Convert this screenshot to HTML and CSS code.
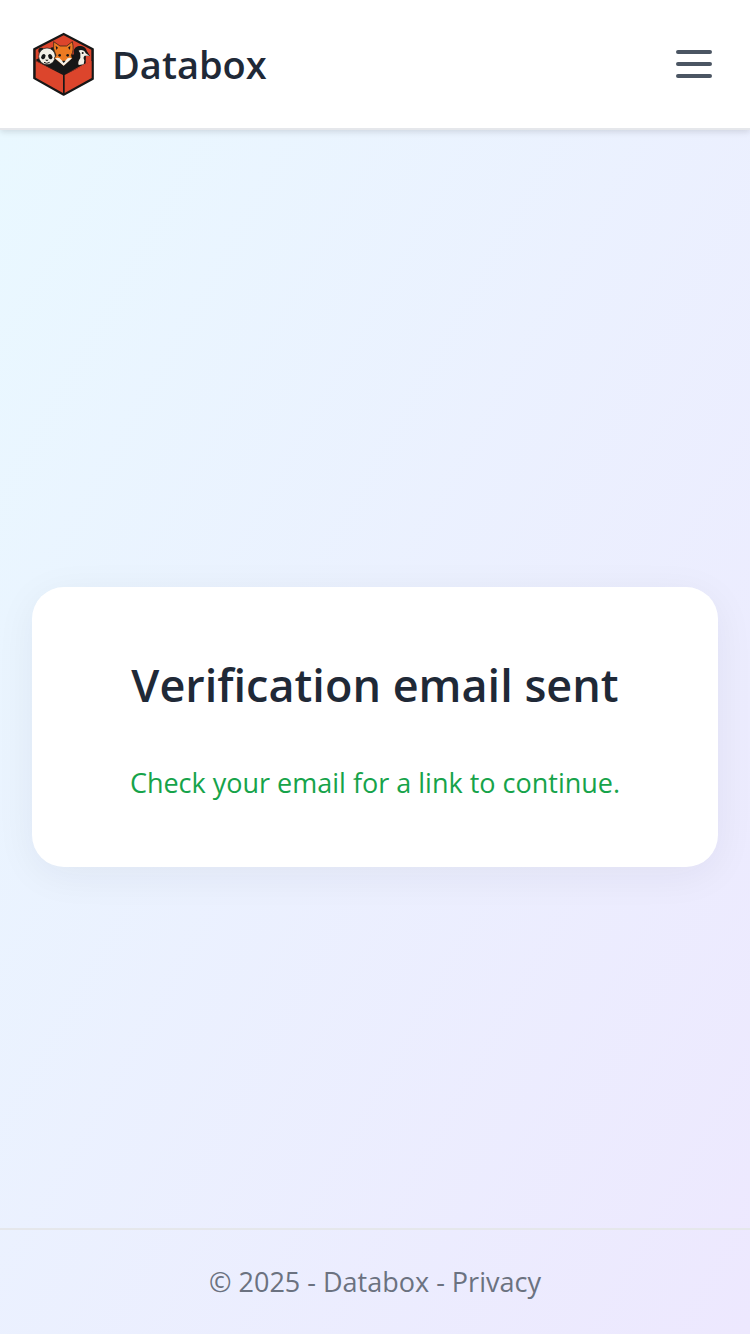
FILE: index.html
```html
<!DOCTYPE html>
<html lang="en">
<head>
<meta charset="utf-8">
<meta name="viewport" content="width=device-width, initial-scale=1">
<title>Databox</title>
<link rel="stylesheet" href="styles.css">
</head>
<body class="page">
<header class="header">
  <a class="brand" href="#">
    <svg class="brand-logo" viewBox="24 24 192 192" aria-hidden="true">
      <path d="M119 29 207 75V165L119 213 30 163V75Z" fill="#171717" stroke="#171717" stroke-width="5" stroke-linejoin="round"/>
      <path d="M119 34 202 77V113L175 127 121 150 66 125 35 110V77Z" fill="#dc452c"/>
      <path d="M37 106 67 96 94 82 119 82 148 92 165 72 185 94V118L121 152 66 125 37 110Z" fill="#171717"/>
      <path d="M35 111 117 153V207L35 161Z" fill="#dc452c"/>
      <path d="M203 111 122 153V207L203 162Z" fill="#dc452c"/>
      <circle cx="52" cy="80" r="9" fill="#171717"/>
      <circle cx="86" cy="79" r="9" fill="#171717"/>
      <ellipse cx="69" cy="97" rx="25" ry="25" fill="#f4f0e6" stroke="#171717" stroke-width="2"/>
      <ellipse cx="58" cy="98" rx="6" ry="8" transform="rotate(30 58 98)" fill="#171717"/>
      <ellipse cx="79" cy="98" rx="6" ry="8" transform="rotate(-30 79 98)" fill="#171717"/>
      <path d="M63 107H74L69 112Z" fill="#171717"/>
      <path d="M60 115Q68 121 77 115" fill="none" stroke="#171717" stroke-width="3"/>
      <path d="M89 53 108 66H128L145 53Q151 79 142 94L145 103 119 126 91 103 96 94Q85 74 89 53Z" fill="#ec7a22" stroke="#171717" stroke-width="2"/>
      <path d="M95 65 102 71 97 78ZM139 65 132 71 138 78Z" fill="#171717"/>
      <path d="M93 103Q106 98 112 108L119 114 126 108Q132 98 144 103L119 125Z" fill="#f4f0e6"/>
      <ellipse cx="107" cy="94" rx="4" ry="4" fill="#171717"/>
      <ellipse cx="131" cy="94" rx="4" ry="4" fill="#171717"/>
      <path d="M114 110H125L119 117Z" fill="#171717"/>
      <path d="M149 82C152 60 184 61 189 82L198 96 185 96 183 118 151 127Z" fill="#171717"/>
      <path d="M164 80C171 76 182 79 185 88L196 95 182 95Q176 100 181 109L179 121 164 123Q160 114 169 102L169 88Z" fill="#f4f0e6"/>
      <circle cx="176" cy="87" r="3" fill="#171717"/>
    </svg>
    <span class="brand-name">Databox</span>
  </a>
  <button class="menu-button" type="button" aria-label="Open menu">
    <svg class="menu-icon" viewBox="0 0 24 24" aria-hidden="true">
      <path d="M4 6h16M4 12h16M4 18h16" fill="none" stroke="currentColor" stroke-width="2" stroke-linecap="round"/>
    </svg>
  </button>
</header>
<main class="main">
  <section class="card">
    <h1 class="card-title">Verification email sent</h1>
    <p class="card-message">Check your email for a link to continue.</p>
  </section>
</main>
<footer class="footer">© 2025 - Databox - <a class="footer-link" href="#">Privacy</a></footer>
</body>
</html>
```
FILE: styles.css
```css
*, *::before, *::after {
  box-sizing: border-box;
}

.page {
  margin: 0;
  min-height: 100vh;
  display: flex;
  flex-direction: column;
  font-family: "Open Sans", "Noto Sans", sans-serif;
  color: #1f2937;
  background: linear-gradient(to bottom right, #e9f9ff, #ede8fe);
}

.header {
  display: flex;
  align-items: center;
  justify-content: space-between;
  padding: 32px;
  background: #fff;
  border-bottom: 2px solid #e5e7eb;
  box-shadow: 0 2px 6px rgba(0, 0, 0, 0.12);
}

.brand {
  display: flex;
  align-items: center;
  gap: 16px;
  color: inherit;
  text-decoration: none;
}

.brand-logo {
  width: 64px;
  height: 64px;
}

.brand-name {
  font-size: 38px;
  line-height: 56px;
  font-weight: 600;
}

.menu-button {
  display: flex;
  padding: 0;
  border: 0;
  background: none;
  color: #4b5563;
}

.menu-icon {
  width: 48px;
  height: 48px;
}

.main {
  flex: 1;
  display: flex;
  flex-direction: column;
  justify-content: center;
  padding: 96px 32px 0;
}

.card {
  padding: 64px;
  border-radius: 32px;
  background: #fff;
  text-align: center;
  box-shadow: 0 8px 40px rgba(31, 41, 55, 0.06);
}

.card-title {
  margin: 0 0 44px;
  font-size: 45px;
  line-height: 68px;
  font-weight: 600;
}

.card-message {
  margin: 0;
  font-size: 27px;
  line-height: 40px;
  color: #16a34a;
}

.footer {
  padding: 32px;
  border-top: 2px solid #e5e7eb;
  font-size: 27px;
  line-height: 40px;
  text-align: center;
  color: #6b7280;
}

.footer-link {
  color: inherit;
  text-decoration: none;
}
```
